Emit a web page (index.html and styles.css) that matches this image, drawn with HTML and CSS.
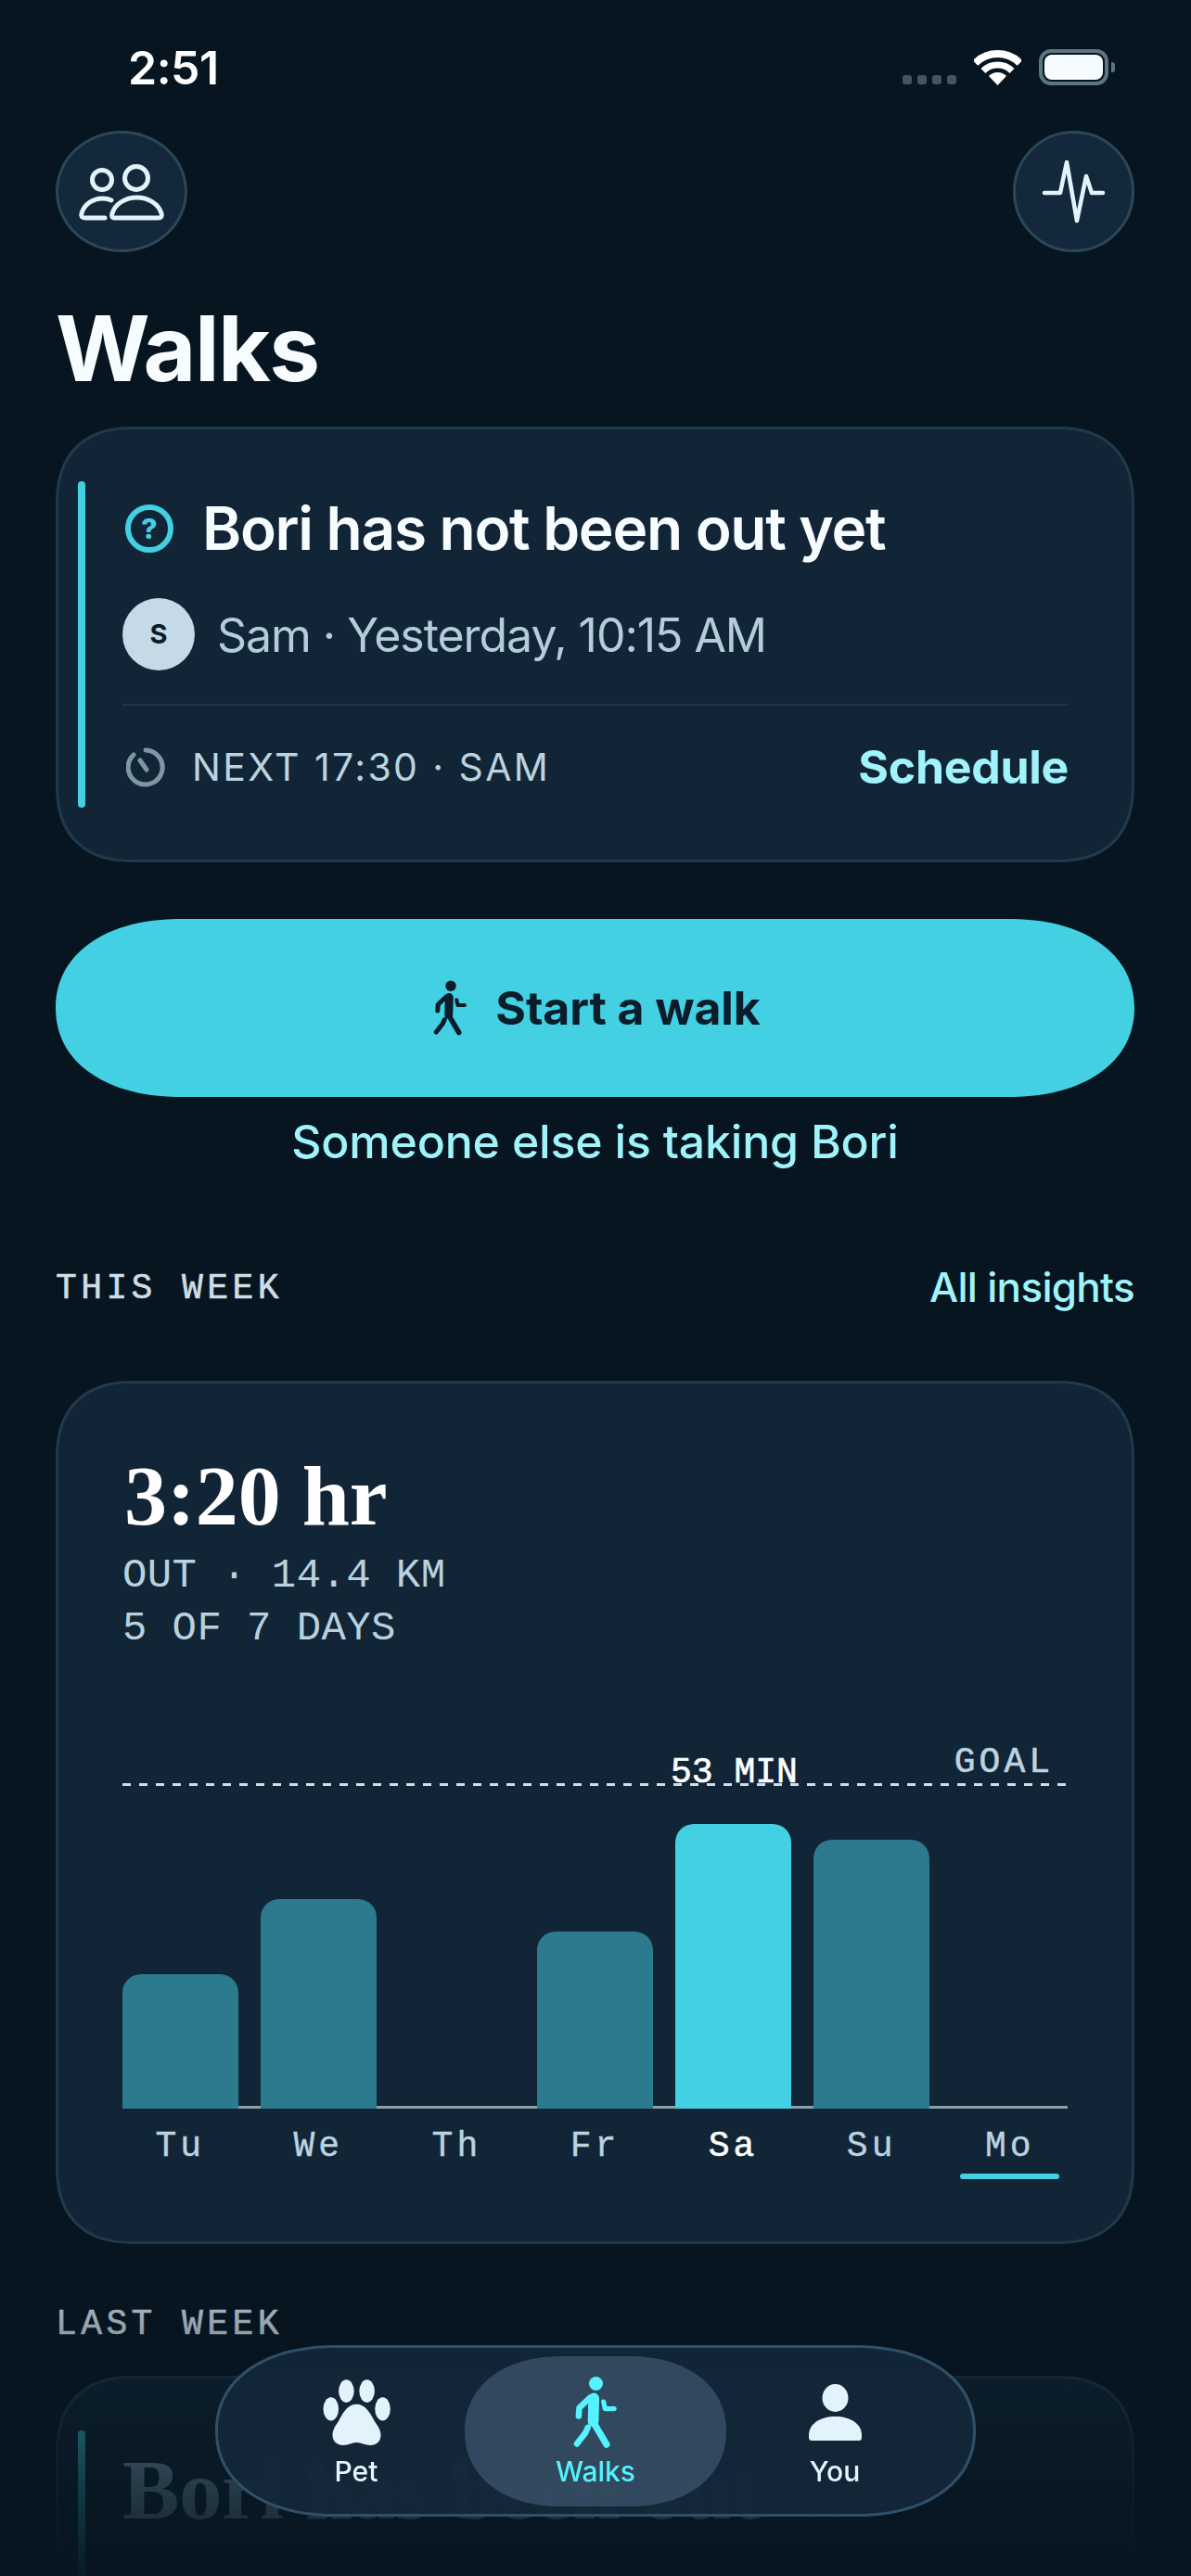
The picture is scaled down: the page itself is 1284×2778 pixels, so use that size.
FILE: index.html
```html
<!DOCTYPE html>
<html lang="en">
<head>
<meta charset="utf-8">
<title>Walks</title>
<link rel="stylesheet" href="styles.css">
</head>
<body>
<div class="page">
  <div class="status">
    <span class="time">2:51</span>
    <div class="status-icons">
      <div class="signal"><i></i><i></i><i></i><i></i></div>
      <svg class="wifi" width="51" height="38" viewBox="0 0 51 38"><path d="M1.5 14A34 34 0 0 1 49.5 14" fill="none" stroke="#fff" stroke-width="8"/><path d="M10 22.5A22 22 0 0 1 41 22.5" fill="none" stroke="#fff" stroke-width="7"/><path d="M25.5 38L16 28A13.5 13.5 0 0 1 35 28Z" fill="#fff"/></svg>
      <div class="battery"><div class="battery-body"><div class="battery-fill"></div></div><div class="battery-nub"></div></div>
    </div>
  </div>

  <div class="top-actions">
    <div class="round round-wide">
      <svg width="94" height="62" viewBox="0 0 94 62" fill="none" stroke="#e2f3fb" stroke-width="5" stroke-linecap="round" stroke-linejoin="round"><circle cx="63" cy="16" r="12.5"/><circle cx="26" cy="18" r="10.5"/><path d="M39.5 59H87C90 59 91 57 90 54C87 44 76 37 63.5 37C51 37 40 44 37 54C36 57 37 59 39.5 59Z"/><path d="M29 59H8C4 59 3 57 4 54C7 44 16 38 27 38C30 38 33 38.5 36 40"/></svg>
    </div>
    <div class="round">
      <svg width="72" height="72" viewBox="0 0 72 72" fill="none" stroke="#e2f3fb" stroke-width="4.5" stroke-linecap="round" stroke-linejoin="round"><path d="M4 37H21L28 4L39 67L49 19L55 37H67"/></svg>
    </div>
  </div>

  <h1 class="title">Walks</h1>

  <section class="card status-card">
    <div class="accent"></div>
    <div class="status-body">
      <div class="status-head">
        <span class="ring">?</span>
        <h2 class="status-title">Bori has not been out yet</h2>
      </div>
      <div class="who">
        <span class="avatar">S</span>
        <span class="who-text">Sam · Yesterday, 10:15 AM</span>
      </div>
      <div class="next">
        <div class="next-left">
          <svg width="42" height="43" viewBox="0 0 42 43" fill="none" stroke="#7f97a4" stroke-width="5" stroke-linecap="round"><path d="M21 3A18.5 18.5 0 1 1 8 8"/><path d="M22 24L15 14"/></svg>
          <span class="next-text">NEXT 17:30 · SAM</span>
        </div>
        <span class="schedule">Schedule</span>
      </div>
    </div>
  </section>

  <button class="cta">
    <svg class="walker" width="38" height="60" viewBox="0 0 150 240" fill="none" stroke="#0b1c2a" stroke-linecap="round" stroke-linejoin="round"><circle cx="75" cy="25" r="23" fill="#0b1c2a" stroke="none"/><path d="M68 74L66 150" stroke-width="36"/><path d="M55 72L20 105L18 132" stroke-width="20"/><path d="M65 150L110 226" stroke-width="22"/><path d="M48 170L40 188L12 224" stroke-width="20"/><path d="M100 85L105 108L135 108" stroke-width="16"/></svg>
    <span>Start a walk</span>
  </button>
  <p class="alt">Someone else is taking Bori</p>

  <div class="section-head">
    <span class="mono-label">THIS WEEK</span>
    <span class="link">All insights</span>
  </div>

  <section class="card week-card">
    <div class="big">3:20 hr</div>
    <div class="stats">
      <div>OUT · 14.4 KM</div>
      <div>5 OF 7 DAYS</div>
    </div>
    <div class="chart">
      <span class="goal-label">GOAL</span>
      <span class="peak-label">53 MIN</span>
      <div class="goal-line"></div>
      <div class="bars">
        <div class="bar" style="height:145px"></div>
        <div class="bar" style="height:226px"></div>
        <div class="bar" style="height:0"></div>
        <div class="bar" style="height:191px"></div>
        <div class="bar bar-on" style="height:307px"></div>
        <div class="bar" style="height:290px"></div>
        <div class="bar" style="height:0"></div>
      </div>
      <div class="days">
        <span>Tu</span><span>We</span><span>Th</span><span>Fr</span><span class="day-on">Sa</span><span>Su</span><span class="day-today">Mo</span>
      </div>
    </div>
  </section>

  <div class="mono-label last-label">LAST WEEK</div>

  <section class="card status-card past-card">
    <div class="accent accent-long"></div>
    <div class="past-body">
      <div class="past-title">Bori has been out</div>
    </div>
  </section>

  <div class="fade"></div>

  <nav class="tabbar">
    <div class="tab">
      <div class="tab-icon"><svg width="73" height="71" viewBox="384 137 219 214" fill="#e2f3fb"><ellipse cx="460" cy="175" rx="25" ry="37"/><ellipse cx="527" cy="175" rx="25" ry="37"/><ellipse cx="410" cy="233" rx="25" ry="38"/><ellipse cx="578" cy="233" rx="25" ry="38"/><path d="M493 218C468 218 452 240 437 268C428 284 415 298 415 318C415 338 430 351 450 351C468 351 478 342 493 342C508 342 520 351 538 351C558 351 572 338 572 318C572 298 558 284 549 268C534 240 518 218 493 218Z"/></svg></div>
      <span>Pet</span>
    </div>
    <div class="tab tab-on">
      <div class="tab-icon"><svg width="49" height="79" viewBox="0 0 150 240" fill="none" stroke="#55f2ff" stroke-linecap="round" stroke-linejoin="round"><circle cx="75" cy="25" r="23" fill="#55f2ff" stroke="none"/><path d="M68 74L66 150" stroke-width="36"/><path d="M55 72L20 105L18 132" stroke-width="20"/><path d="M65 150L110 226" stroke-width="22"/><path d="M48 170L40 188L12 224" stroke-width="20"/><path d="M100 85L105 108L135 108" stroke-width="16"/></svg></div>
      <span>Walks</span>
    </div>
    <div class="tab">
      <div class="tab-icon"><svg width="57" height="61" viewBox="0 0 57 61" fill="#e2f3fb"><ellipse cx="28.5" cy="15" rx="14" ry="15"/><path d="M0 57V55C0 43 12 35 28.5 35C45 35 57 43 57 55V57C57 60 56 61 54 61H3C1 61 0 60 0 57Z"/></svg></div>
      <span>You</span>
    </div>
  </nav>
</div>
</body>
</html>
```

FILE: styles.css
```css
* { box-sizing: border-box; }
html, body { margin: 0; padding: 0; background: #06151f; }
.page {
  position: relative;
  width: 1284px;
  height: 2778px;
  overflow: hidden;
  padding: 0 61px 0 60px;
  background: #06151f;
  color: #fff;
  font-family: Inter, "Noto Sans", sans-serif;
}

/* status bar */
.status {
  height: 141px;
  margin: 0 -61px 0 -60px;
  padding: 53px 82px 0 138px;
  display: flex;
  justify-content: space-between;
  align-items: flex-start;
}
.time { font-size: 50px; line-height: 40px; font-weight: 600; letter-spacing: -0.5px; color: #fff; }
.status-icons { display: flex; align-items: flex-end; gap: 19px; height: 39px; }
.signal { display: flex; gap: 6px; margin-bottom: 1px; }
.signal i { display: block; width: 10px; height: 10px; border-radius: 3px; background: #3e5666; }
.battery { display: flex; align-items: center; gap: 3px; }
.battery-body { width: 75px; height: 39px; border: 4px solid #5d7481; border-radius: 13px; padding: 2px; }
.battery-fill { width: 100%; height: 100%; border-radius: 8px; background: #f5fbff; }
.battery-nub { width: 4px; height: 11px; border-radius: 0 3px 3px 0; background: #5d7481; }

/* top buttons */
.top-actions { display: flex; justify-content: space-between; }
.round {
  width: 131px;
  height: 131px;
  border-radius: 50%;
  border: 3px solid #2b475a;
  background: #13283a;
  display: flex;
  align-items: center;
  justify-content: center;
}
.round-wide { width: 142px; }

.title {
  margin: 54px 0 34px;
  font-size: 98px;
  line-height: 100px;
  font-weight: 700;
  letter-spacing: -1.5px;
  color: #f7fcff;
}

/* cards */
.card {
  border: 3px solid #1f3a4b;
  border-radius: 84px;
  corner-shape: superellipse(1.25);
  background: #112536;
}
.status-card {
  display: flex;
  padding: 56px 69px 56px 21px;
}
.accent { flex: none; width: 8px; border-radius: 4px; background: #42d0e2; }
.status-body { flex: 1; margin-left: 40px; padding: 19px 0 16px; }
.status-head { display: flex; align-items: center; padding-left: 3px; gap: 31px; height: 64px; }
.ring {
  width: 52px;
  height: 52px;
  border-radius: 50%;
  border: 6px solid #42d0e2;
  color: #42d0e2;
  font-size: 30px;
  font-weight: 800;
  line-height: 40px;
  text-align: center;
}
.status-title { margin: 0; font-size: 64px; line-height: 64px; font-weight: 600; letter-spacing: -1.3px; color: #f7fcff; }
.who { display: flex; align-items: center; gap: 24px; margin-top: 43px; padding-bottom: 36px; border-bottom: 2px solid #1e3647; }
.avatar {
  width: 78px;
  height: 78px;
  border-radius: 50%;
  background: #c5d9e6;
  color: #0b1c2a;
  font-size: 29px;
  font-weight: 700;
  line-height: 78px;
  text-align: center;
}
.who-text { font-size: 50px; line-height: 60px; color: #b5cddb; letter-spacing: -1.05px; position: relative; top: 1px; }
.next { display: flex; align-items: center; justify-content: space-between; height: 56px; margin-top: 38px; }
.next-left { display: flex; align-items: center; gap: 29px; padding-left: 4px; }
.next-text { font-size: 41px; line-height: 50px; color: #bcd3e0; letter-spacing: 2.4px; }
.schedule { margin-right: -1px; font-size: 50px; line-height: 56px; font-weight: 700; color: #a0f2fb; letter-spacing: -0.3px; }

/* primary action */
.cta {
  display: flex;
  align-items: center;
  justify-content: center;
  gap: 29px;
  width: 100%;
  height: 192px;
  margin-top: 61px;
  padding: 0 0 0 4px;
  border: 0;
  border-radius: 135px / 96px;
  corner-shape: superellipse(1.12);
  background: #42d0e2;
  color: #0b1c2a;
  font-family: inherit;
  font-size: 50px;
  font-weight: 700;
  letter-spacing: -0.1px;
}
.alt { margin: 20px 0 0; font-size: 50px; line-height: 56px; font-weight: 500; color: #a0f2fb; text-align: center; letter-spacing: -0.2px; }

.section-head { display: flex; justify-content: space-between; align-items: center; height: 50px; margin-top: 104px; }
.section-head .mono-label { position: relative; top: 2px; }
.mono-label { font-family: "Liberation Mono", monospace; font-size: 38px; line-height: 40px; letter-spacing: 4.4px; color: #cfdde6; -webkit-text-stroke: 0.6px currentColor; }
.link { font-size: 44px; line-height: 50px; font-weight: 500; color: #a0f2fb; letter-spacing: -0.7px; }

/* week summary */
.week-card { margin-top: 76px; padding: 71px 69px 67px 69px; }
.big { margin-left: 2px; font-family: "Liberation Serif", serif; font-size: 92px; line-height: 100px; font-weight: 700; color: #fff; }
.stats { margin-top: 8px; font-family: "Liberation Mono", monospace; font-size: 44px; line-height: 57px; letter-spacing: .4px; color: #b9d1df; }
.chart { position: relative; margin-top: 138px; }
.goal-label, .peak-label { position: absolute; font-family: "Liberation Mono", monospace; font-size: 38px; line-height: 40px; }
.goal-label { right: 15px; top: -42px; letter-spacing: 4px; color: #bcd3e0; -webkit-text-stroke: 0.6px currentColor; }
.peak-label { left: 591px; top: -31px; letter-spacing: 0; color: #fff; -webkit-text-stroke: 0.7px currentColor; }
.goal-line { height: 3px; background: repeating-linear-gradient(90deg, #cfdde6 0 9px, transparent 9px 18px); }
.bars {
  position: relative;
  display: grid;
  grid-template-columns: repeat(7, 1fr);
  column-gap: 24.5px;
  align-items: end;
  height: 348px;
}
.bars::before { content: ""; position: absolute; left: 0; right: 0; bottom: 0; height: 3px; background: #8a9faa; }
.bar { position: relative; border-radius: 20px 20px 0 0; background: #2c7a8e; }
.bar-on { background: #42d0e2; }
.days {
  display: grid;
  grid-template-columns: repeat(7, 1fr);
  column-gap: 24.5px;
  margin-top: 21px;
  font-family: "Liberation Mono", monospace;
  font-size: 38px;
  line-height: 40px;
  letter-spacing: 4px;
  text-align: center;
  color: #bcd3e0;
  -webkit-text-stroke: 0.4px currentColor;
}
.days span { padding-bottom: 15px; }
.day-on { color: #fff; -webkit-text-stroke: 0.6px currentColor; }
.day-today { position: relative; }
.day-today::after { content: ""; position: absolute; left: 9px; right: 9px; bottom: 0; height: 6px; border-radius: 3px; background: #42d0e2; }

.last-label { margin-top: 67px; }
.past-card { margin-top: 35px; }
.accent-long { height: 400px; }
.past-body { margin-left: 40px; padding-top: 14px; }
.past-title { font-family: "Liberation Serif", serif; font-size: 92px; line-height: 100px; font-weight: 700; color: #a8d0e8; white-space: nowrap; }

.fade {
  position: absolute;
  left: 0;
  right: 0;
  bottom: 0;
  height: 378px;
  background: linear-gradient(180deg, rgba(6,21,31,0) 0%, rgba(6,21,31,.25) 26%, rgba(6,21,31,.5) 44%, rgba(6,21,31,.8) 74%, rgba(6,21,31,.97) 100%);
}

/* tab bar */
.tabbar {
  position: absolute;
  left: 232px;
  top: 2529px;
  width: 820px;
  height: 185px;
  display: grid;
  grid-template-columns: 234px 282px 234px;
  padding: 9px 32px 8px;
  border: 3px solid #2f5068;
  border-radius: 130px / 92px;
  corner-shape: superellipse(1.12);
  background: rgba(20, 40, 58, .88);
  backdrop-filter: blur(6px);
}
.tab { display: flex; flex-direction: column; align-items: center; padding-top: 20px; font-size: 30px; line-height: 36px; font-weight: 500; color: #e6f5fc; }
.tab-icon { display: flex; align-items: center; justify-content: center; height: 80px; margin-bottom: 6px; }
.tab-on { border-radius: 105px / 81px; corner-shape: superellipse(1.12); background: rgba(82, 108, 134, .5); color: #55f2ff; }
```
